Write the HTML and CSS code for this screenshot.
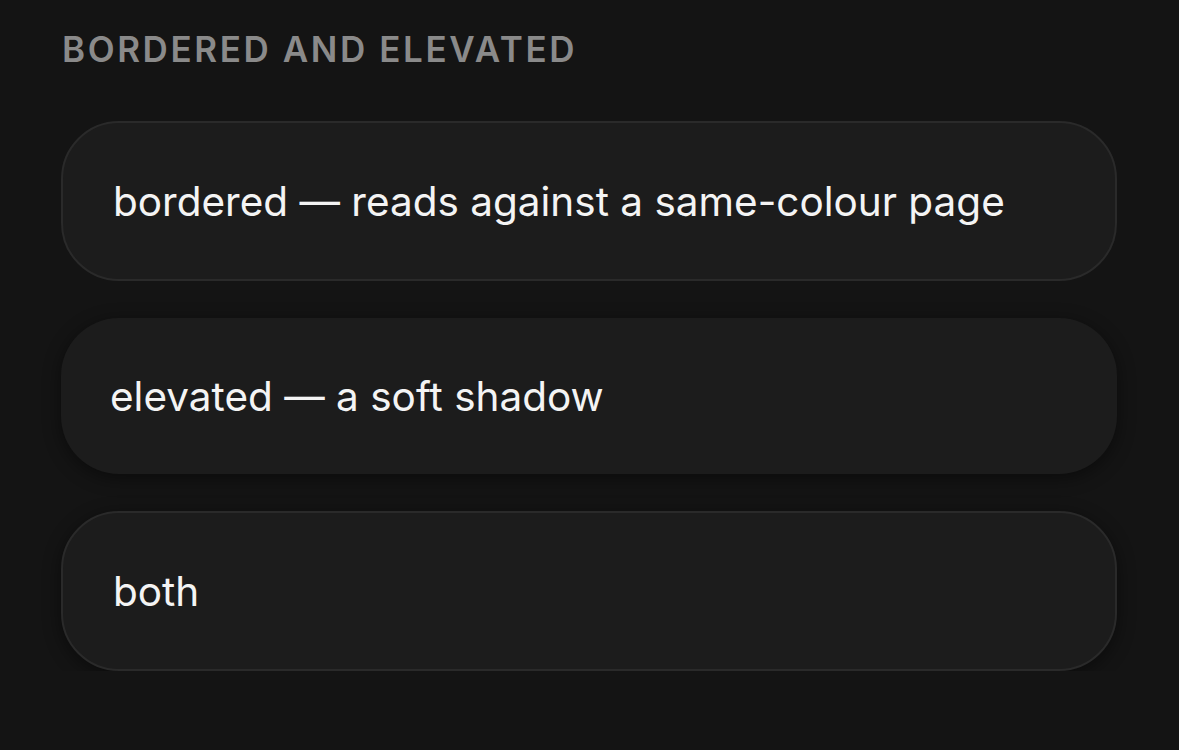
FILE: index.html
```html
<!DOCTYPE html>
<html lang="en">
<head>
    <meta charset="UTF-8">
    <meta name="viewport" content="width=device-width, initial-scale=1.0">
    <title>Card styles</title>
    <link rel="stylesheet" href="styles.css">
</head>
<body>

    <section class="group">
        <h2 class="group-title">Bordered and elevated</h2>

        <div class="card card-bordered">bordered — reads against a same-colour page</div>
        <div class="card card-elevated">elevated — a soft shadow</div>
        <div class="card card-bordered card-elevated">both</div>
    </section>

</body>
</html>
```

FILE: styles.css
```css
body {
    font-family: 'Inter', 'Noto Sans', sans-serif;
    background-color: #141414;
    color: #f4f4f4;
    margin: 0;
    padding: 0;
}

.group {
    padding: 31px 62px 0 61px;
    display: flex;
    flex-direction: column;
    gap: 37px;
}

.group-title {
    margin: 0 0 17px 1px;
    font-size: 35px;
    font-weight: 600;
    letter-spacing: 2.6px;
    text-transform: uppercase;
    color: #8a8a8a;
    line-height: 36px;
}

.card {
    background-color: #1c1c1c;
    border-radius: 58px;
    height: 156px;
    padding: 0 49px;
    display: flex;
    align-items: center;
    font-size: 40.5px;
    box-sizing: border-box;
}

.card-bordered {
    border: 2px solid #2a2a2a;
    height: 160px;
    padding: 0 50px;
}

.card-elevated {
    box-shadow: 0 4px 18px rgba(0, 0, 0, 0.45);
}
```
